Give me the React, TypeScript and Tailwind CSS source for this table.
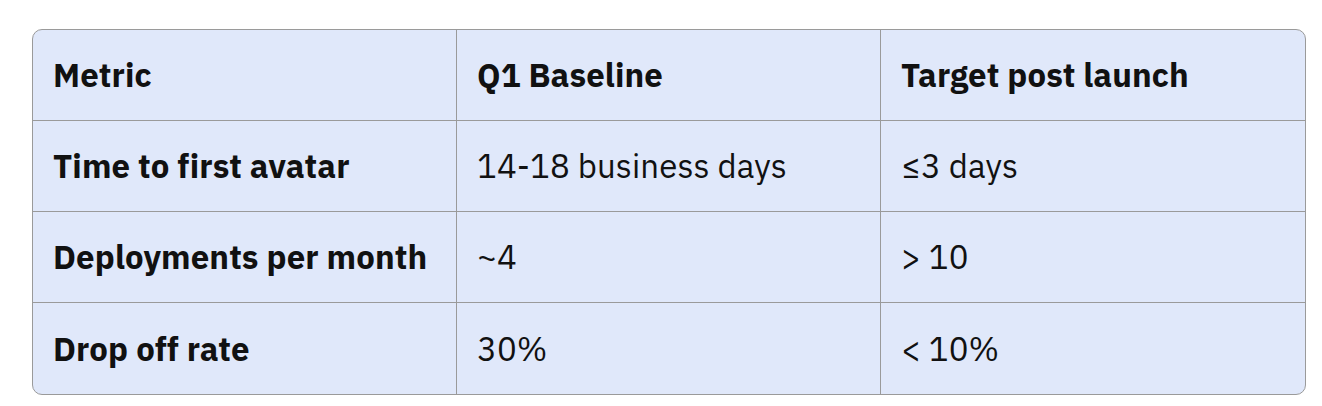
const rows = [
  ["Metric", "Q1 Baseline", "Target post launch"],
  ["Time to first avatar", "14-18 business days", "≤3 days"],
  ["Deployments per month", "~4", "> 10"],
  ["Drop off rate", "30%", "< 10%"],
];

export default function App() {
  return (
    <div
      className="w-[1322px] h-[406px] bg-white pt-[29px] pl-[32px]"
      style={{ fontFamily: "'IBM Plex Sans', Inter, 'Noto Sans', sans-serif" }}
    >
      <div className="w-[1274px] border border-[#9a9a9a] rounded-[10px] overflow-hidden bg-[#e0e8fa]">
        {rows.map((row, r) => (
          <div
            key={r}
            className={`grid grid-cols-[424px_424px_424px] ${r < rows.length - 1 ? "border-b border-[#9a9a9a]" : ""}`}
          >
            {row.map((cell, c) => (
              <div
                key={c}
                className={`${r === 3 ? "h-[91px]" : "h-[90px]"} flex items-center pl-[20px] text-[33px] tracking-[0.1px] text-[#111] ${c < 2 ? "border-r border-[#9a9a9a]" : ""} ${r === 0 || c === 0 ? "font-bold" : "font-normal"}`}
              >
                {cell}
              </div>
            ))}
          </div>
        ))}
      </div>
    </div>
  );
}
